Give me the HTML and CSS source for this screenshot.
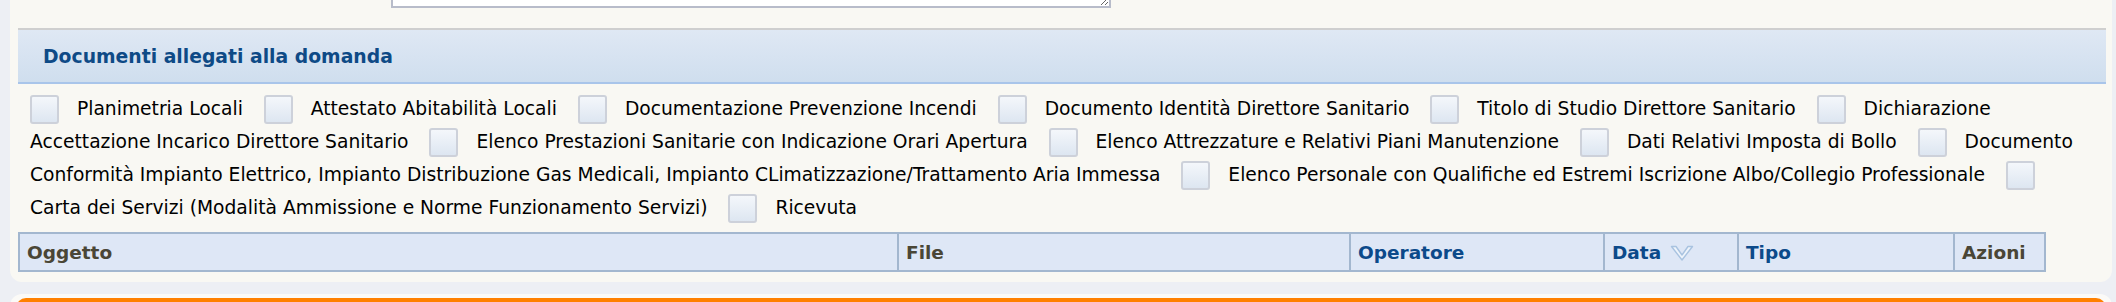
FILE: index.html
```html
<!DOCTYPE html>
<html lang="it">
<head>
  <meta charset="UTF-8">
  <title>Documenti allegati alla domanda</title>
  <link rel="stylesheet" href="styles.css">
</head>
<body>
  <div class="panel">
    <div class="prev-field">
      <textarea class="note"></textarea>
    </div>

    <div class="section-head">
      <h2>Documenti allegati alla domanda</h2>
    </div>

    <div class="doc-types">
      <input type="checkbox" class="chk"> <label>Planimetria Locali</label>
      <input type="checkbox" class="chk"> <label>Attestato Abitabilità Locali</label>
      <input type="checkbox" class="chk"> <label>Documentazione Prevenzione Incendi</label>
      <input type="checkbox" class="chk"> <label>Documento Identità Direttore Sanitario</label>
      <input type="checkbox" class="chk"> <label>Titolo di Studio Direttore Sanitario</label>
      <input type="checkbox" class="chk"> <label>Dichiarazione Accettazione Incarico Direttore Sanitario</label>
      <input type="checkbox" class="chk"> <label>Elenco Prestazioni Sanitarie con Indicazione Orari Apertura</label>
      <input type="checkbox" class="chk"> <label>Elenco Attrezzature e Relativi Piani Manutenzione</label>
      <input type="checkbox" class="chk"> <label>Dati Relativi Imposta di Bollo</label>
      <input type="checkbox" class="chk"> <label>Documento Conformità Impianto Elettrico, Impianto Distribuzione Gas Medicali, Impianto CLimatizzazione/Trattamento Aria Immessa</label>
      <input type="checkbox" class="chk"> <label>Elenco Personale con Qualifiche ed Estremi Iscrizione Albo/Collegio Professionale</label>
      <input type="checkbox" class="chk"> <label>Carta dei Servizi (Modalità Ammissione e Norme Funzionamento Servizi)</label>
      <input type="checkbox" class="chk"> <label>Ricevuta</label>
    </div>

    <table class="docs">
      <thead>
        <tr>
          <th class="c-ogg">Oggetto</th>
          <th class="c-file">File</th>
          <th class="c-op"><a href="#">Operatore</a></th>
          <th class="c-data"><a href="#">Data</a>
            <svg class="sort" width="24" height="16" viewBox="0 0 24 16">
              <path d="M1.5 1.5 H6 L12 10 L18 1.5 H22.5 L12 15 Z" fill="#eef4fb" stroke="#a9c3e0" stroke-width="1.4" stroke-linejoin="round"/>
            </svg>
          </th>
          <th class="c-tipo"><a href="#">Tipo</a></th>
          <th class="c-az">Azioni</th>
        </tr>
      </thead>
    </table>
  </div>

  <div class="panel next">
    <div class="orange-head"></div>
  </div>
</body>
</html>
```

FILE: styles.css
```css
body { margin: 0; background: #edeff4; font-family: "DejaVu Sans", Verdana, sans-serif; font-size: 18.7px; color: #000; }

.panel { margin-left: 10px; margin-right: 4px; background: #f9f8f3; border-radius: 0 0 12px 12px; padding: 0 2px 10px 8px; }
.panel.next { margin-top: 12px; background: #fbfaf7; border-radius: 12px 12px 0 0; padding: 4px 6px 0 6px; }
.orange-head { height: 20px; background: #ff8000; border-radius: 10px 10px 0 0; }

.prev-field { height: 8px; display: flex; align-items: flex-end; overflow: hidden; margin-left: 373px; }
.note { width: 720px; height: 60px; border: 2px solid #b8bcca; background: #fff; margin: 0; padding: 0; box-sizing: border-box; display: block; }

.section-head { margin: 20px 4px 0 0; height: 56px; box-sizing: border-box; border-top: 2px solid #cfcfcf; border-bottom: 2px solid #a9c5ea;
  background: linear-gradient(#dfe8f4, #cfdeee); display: flex; align-items: center; padding-left: 25px; }
.section-head h2 { margin: 0; font-size: 18.8px; font-weight: bold; color: #0e4a86; }

.doc-types { padding: 8px 22px 0 12px; line-height: 33px; }
.chk { appearance: none; -webkit-appearance: none; width: 29px; height: 29px; margin: 0 12px 0 0; vertical-align: middle; box-sizing: border-box;
  border: 2px solid #cdd1da; border-radius: 3px; background: linear-gradient(#f4f7fb, #dde6f1); }
.doc-types label { margin-right: 15px; }

.docs { margin-top: 8px; width: 2028px; border-collapse: collapse; border: 2px solid #9fb4cd; }
.docs th { background: #dee7f6; border: 2px solid #a3b7cf; text-align: left; height: 36px; padding: 0 0 0 7px; font-size: 18.5px; font-weight: bold; color: #4a4636; white-space: nowrap; }
.docs th a { color: #0c4a8a; text-decoration: none; }
.docs .sort { vertical-align: -2px; margin-left: 2px; }
.c-ogg { width: 870px; }
.c-file { width: 443px; }
.c-op { width: 245px; }
.c-data { width: 125px; }
.c-tipo { width: 207px; }
```
